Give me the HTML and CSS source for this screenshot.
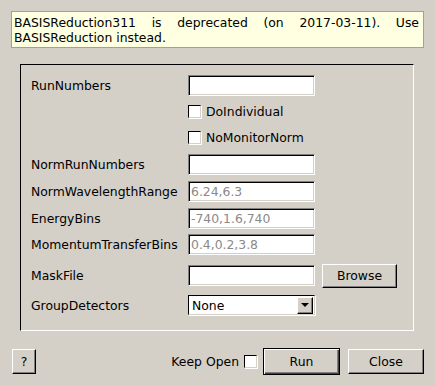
FILE: index.html
```html
<!DOCTYPE html>
<html lang="en">

<head>
    <meta charset="UTF-8">
    <title>BASISReduction311</title>
    <link rel="stylesheet" href="styles.css">
</head>

<body>
    <div class="dialog">
        <div class="banner">BASISReduction311 is deprecated (on 2017-03-11). Use BASISReduction instead.</div>

        <div class="group">
            <div class="row short">
                <span class="label">RunNumbers</span>
                <input class="field" type="text">
            </div>
            <div class="row short">
                <span class="label"></span>
                <label class="check"><span class="box"></span>DoIndividual</label>
            </div>
            <div class="row">
                <span class="label"></span>
                <label class="check"><span class="box"></span>NoMonitorNorm</label>
            </div>
            <div class="row">
                <span class="label">NormRunNumbers</span>
                <input class="field" type="text">
            </div>
            <div class="row">
                <span class="label">NormWavelengthRange</span>
                <input class="field muted" type="text" value="6.24,6.3">
            </div>
            <div class="row short">
                <span class="label">EnergyBins</span>
                <input class="field muted" type="text" value="-740,1.6,740">
            </div>
            <div class="row">
                <span class="label">MomentumTransferBins</span>
                <input class="field muted" type="text" value="0.4,0.2,3.8">
            </div>
            <div class="row row-file">
                <span class="label">MaskFile</span>
                <input class="field" type="text">
                <button class="btn browse">Browse</button>
            </div>
            <div class="row row-combo">
                <span class="label">GroupDetectors</span>
                <div class="combo">
                    <span class="combo-text">None</span>
                    <span class="combo-arrow"></span>
                </div>
            </div>
        </div>

        <div class="footer">
            <button class="btn help">?</button>
            <div class="actions">
                <label class="keep">Keep Open <span class="box"></span></label>
                <button class="btn default">Run</button>
                <button class="btn close">Close</button>
            </div>
        </div>
    </div>
</body>

</html>
```

FILE: styles.css
```css
* {
    margin: 0;
    padding: 0;
    box-sizing: border-box;
}

body {
    font-family: "DejaVu Sans", sans-serif;
    font-size: 12.4px;
    color: #000;
    background-color: #d4d0c8;
    width: 435px;
    height: 386px;
    overflow: hidden;
}

.dialog {
    padding: 11px 11px 0 11px;
}

.banner {
    height: 37px;
    border: 1px solid #a0a0a0;
    background-color: #ffffe1;
    padding: 3px 4px 0 2px;
    line-height: 15px;
    text-align: justify;
}

.group {
    margin: 16px 10px 0 9px;
    height: 267px;
    padding: 7px 0 0 10px;
    border-top: 1px solid #000;
    border-left: 1px solid #000;
    border-bottom: 1px solid #fff;
    border-right: 1px solid #fff;
}

.row {
    display: flex;
    align-items: center;
    height: 27px;
}

.row.short {
    height: 26px;
}

.row-file {
    height: 31px;
    margin-top: 2px;
}

.row-combo {
    height: 28px;
}

.label {
    width: 157px;
    flex: none;
    white-space: nowrap;
}

.field {
    width: 127px;
    height: 21px;
    font: inherit;
    padding: 0 2px;
    background-color: #fff;
    border: 1px solid;
    border-color: #808080 #fff #fff #808080;
    box-shadow: inset 1px 1px 0 #000, inset -1px -1px 0 #d4d0c8;
    outline: none;
}

.muted {
    color: #8a8a8a;
}

.check {
    display: flex;
    align-items: center;
    gap: 5px;
}

.box {
    display: inline-block;
    width: 13px;
    height: 13px;
    background-color: #fff;
    border: 1px solid;
    border-color: #000 #d4d0c8 #d4d0c8 #000;
    box-shadow: 1px 1px 0 #fff;
}

.btn {
    font: inherit;
    color: #000;
    background-color: #d4d0c8;
    border: 1px solid;
    border-color: #fff #000 #000 #fff;
    box-shadow: inset -1px -1px 0 #808080;
    cursor: pointer;
}

.browse {
    width: 75px;
    height: 24px;
    margin-left: 7px;
}

.combo {
    width: 127px;
    height: 20px;
    display: flex;
    align-items: center;
    background-color: #fff;
    border: 1px solid;
    border-color: #000 #d4d0c8 #d4d0c8 #000;
    box-shadow: 1px 1px 0 #fff;
    padding: 1px;
}

.combo-text {
    flex: 1;
    padding-left: 2px;
}

.combo-arrow {
    position: relative;
    width: 16px;
    height: 17px;
    background-color: #d4d0c8;
    border: 1px solid;
    border-color: #fff #000 #000 #fff;
    box-shadow: inset -1px -1px 0 #808080;
}

.combo-arrow::after {
    content: "";
    position: absolute;
    left: 3px;
    top: 5px;
    border-left: 4px solid transparent;
    border-right: 4px solid transparent;
    border-top: 4px solid #000;
}

.footer {
    display: flex;
    align-items: center;
    justify-content: space-between;
    height: 27px;
    margin: 17px 0 0 1px;
}

.help {
    width: 24px;
    height: 25px;
}

.actions {
    display: flex;
    align-items: center;
}

.keep {
    display: flex;
    align-items: center;
    gap: 5px;
    margin-right: 6px;
}

.default {
    width: 77px;
    height: 27px;
    border: 1px solid #000;
    box-shadow: inset 1px 1px 0 #fff, inset -1px -1px 0 #404040, inset -2px -2px 0 #808080;
    margin-right: 8px;
}

.close {
    width: 76px;
    height: 25px;
}
```
